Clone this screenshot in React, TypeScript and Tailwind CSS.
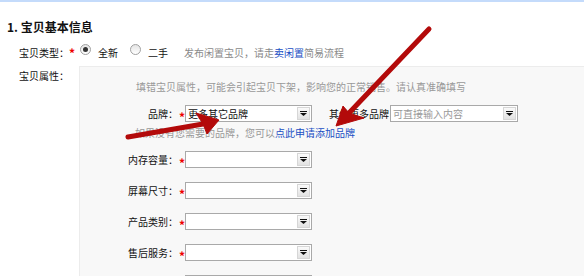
const font = { fontFamily: '"Noto Sans CJK SC", "Noto Sans", sans-serif' };

function Select({ value, placeholder, width = "w-[127px]" }: { value?: string; placeholder?: string; width?: string }) {
  return (
    <div className={`flex h-[17px] ${width} border border-[#a9a9a9] bg-white`}>
      <div className="flex-1 overflow-hidden whitespace-nowrap pl-[2px] text-[10px] leading-[15px]">
        {value ? <span className="text-[#111]">{value}</span> : <span className="text-[#999]">{placeholder}</span>}
      </div>
      <div className="m-[1px] flex w-[13px] items-center justify-center border border-[#d6d6d6] bg-gradient-to-b from-[#fafafa] to-[#e2e2e2]">
        <svg width="7" height="5" viewBox="0 0 7 5">
          <rect x="0" y="0" width="7" height="1" fill="#111" />
          <polygon points="0,2 7,2 3.5,5" fill="#111" />
        </svg>
      </div>
    </div>
  );
}

function Radio({ checked }: { checked?: boolean }) {
  return (
    <span className="flex h-[11px] w-[11px] items-center justify-center rounded-full border border-[#a0a0a0] bg-gradient-to-b from-[#e4e4e4] to-white">
      {checked && <span className="h-[5px] w-[5px] rounded-full bg-[#333]" />}
    </span>
  );
}

function Star() {
  return <span className="text-[12px] font-bold leading-[10px] text-[#e00]">*</span>;
}

function AttrRow({ label, value, placeholder, className = "" }: { label: string; value?: string; placeholder?: string; className?: string }) {
  return (
    <div className={`flex h-[17px] items-center ${className}`}>
      <div className="w-[98px] text-right text-[10px] text-[#111]">{label}</div>
      <div className="w-[7px] pl-[1px] pt-[3px]">{label && <Star />}</div>
      <Select value={value} placeholder={placeholder} />
    </div>
  );
}

export default function App() {
  return (
    <div className="relative h-[276px] w-[584px] overflow-hidden bg-white" style={font}>
      <div className="h-[2px] bg-[#c4dbfb]" />

      {/* heading */}
      <div className="mt-[17px] pl-[7px] text-[12px] font-bold leading-[16px] text-[#111]">1. 宝贝基本信息</div>

      {/* item type */}
      <div className="mt-[10px] flex h-[14px] items-center pl-[19px] text-[10px] text-[#111]">
        <span>宝贝类型：</span>
        <span className="pt-[3px]"><Star /></span>
        <span className="ml-[5px] mt-[-5px]"><Radio checked /></span>
        <span className="ml-[7px]">全新</span>
        <span className="ml-[12px] mt-[-5px]"><Radio /></span>
        <span className="ml-[7px]">二手</span>
        <span className="ml-[16px] text-[#8a8a8a]">发布闲置宝贝，请走</span>
        <span className="text-[#1a4fc4]">卖闲置</span>
        <span className="text-[#8a8a8a]">简易流程</span>
      </div>

      {/* attributes */}
      <div className="mt-[7px] flex">
        <div className="w-[79px] pl-[19px] pt-[3px] text-[10px] leading-[14px] text-[#111]">宝贝属性：</div>
        <div className="h-[220px] flex-1 border-l border-t border-[#ececec] bg-[#f8f8f8]">
          <div className="pl-[56px] pt-[13px] text-[10px] leading-[14px] text-[#999]">
            填错宝贝属性，可能会引起宝贝下架，影响您的正常销售。请认真准确填写
          </div>

          <div className="mt-[11px] flex items-center">
            <AttrRow label="品牌：" value="更多其它品牌" />
            <span className="ml-[17px] text-[10px] text-[#111]">其他更多品牌</span>
            <span className="ml-[1px]"><Select placeholder="可直接输入内容" width="w-[128px]" /></span>
          </div>

          <div className="mt-[4px] pl-[55px] text-[10px] leading-[14px] text-[#999]">
            如果没有您需要的品牌，您可以<span className="text-[#1a4fc4]">点此申请添加品牌</span>
          </div>

          <AttrRow label="内存容量：" className="mt-[11px]" />
          <AttrRow label="屏幕尺寸：" className="mt-[14px]" />
          <AttrRow label="产品类别：" className="mt-[14px]" />
          <AttrRow label="售后服务：" className="mt-[14px]" />
          <AttrRow label="" className="mt-[14px]" />
        </div>
      </div>

      {/* annotation arrows */}
      <svg className="pointer-events-none absolute left-0 top-0" width="584" height="276" viewBox="0 0 584 276">
        <g fill="#b30a0a" stroke="#b30a0a">
          <line x1="128" y1="137" x2="203" y2="124" strokeWidth="5" strokeLinecap="round" />
          <polygon points="219,120 196,113 203,124 207,134" strokeWidth="1" strokeLinejoin="round" />
          <line x1="429" y1="29" x2="349" y2="113" strokeWidth="5" strokeLinecap="round" />
          <polygon points="336,126 343,106 349,113 364,118" strokeWidth="1" strokeLinejoin="round" />
        </g>
      </svg>
    </div>
  );
}
